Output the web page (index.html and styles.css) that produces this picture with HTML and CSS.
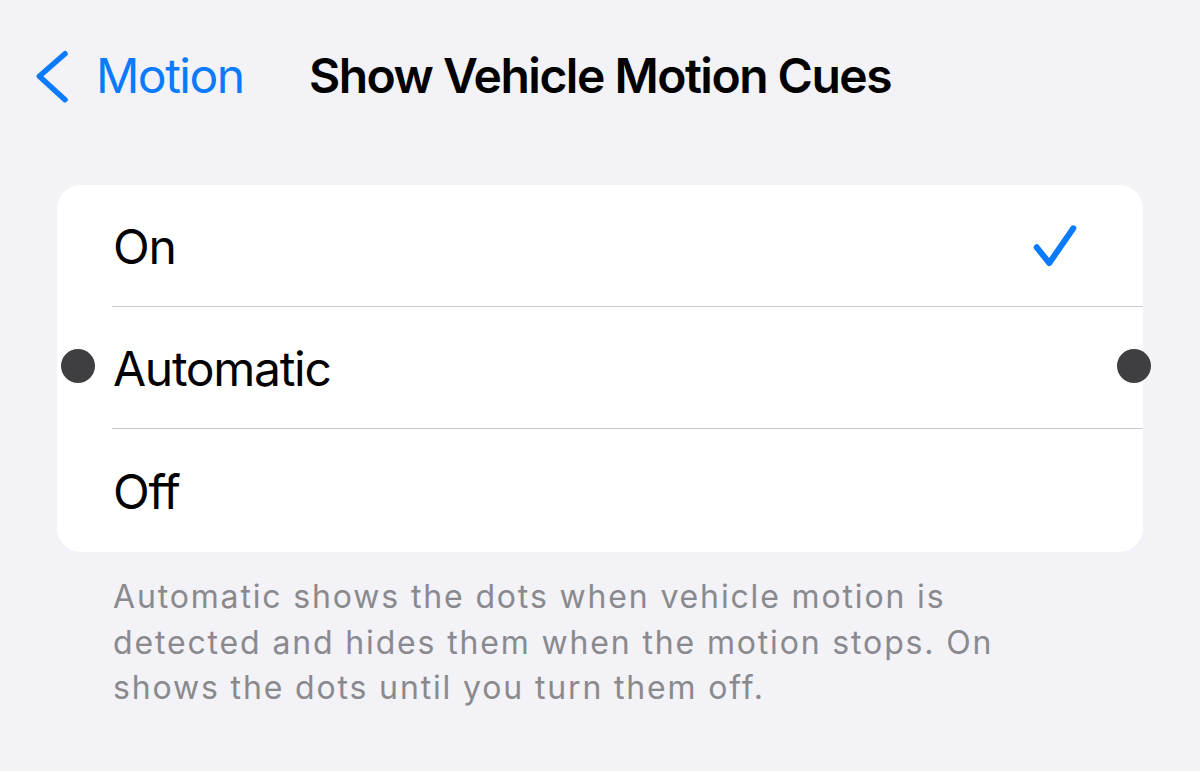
FILE: index.html
```html
<!DOCTYPE html>
<html lang="en">
<head>
<meta charset="utf-8">
<title>Show Vehicle Motion Cues</title>
<link rel="stylesheet" href="styles.css">
</head>
<body>
<header class="nav">
  <a class="back" href="#">
    <svg class="chevron" width="36" height="57" viewBox="0 0 36 57" aria-hidden="true">
      <polyline points="31,5.7 5.3,28.3 31,51.7" fill="none" stroke="#0a7aff" stroke-width="5.5" stroke-linecap="round" stroke-linejoin="round"/>
    </svg>
    <span class="back-label">Motion</span>
  </a>
  <h1 class="title">Show Vehicle Motion Cues</h1>
  <span class="spacer"></span>
</header>

<main class="content">
  <section class="group">
    <div class="row">
      <div class="row-inner">
        <span class="label">On</span>
        <svg class="check" width="50" height="46" viewBox="0 0 50 46" aria-hidden="true">
          <polyline points="6.7,24.3 19.3,40 43.3,5.3" fill="none" stroke="#0a7aff" stroke-width="6" stroke-linecap="round" stroke-linejoin="round"/>
        </svg>
      </div>
    </div>
    <div class="row">
      <div class="row-inner">
        <span class="label">Automatic</span>
      </div>
    </div>
    <div class="row">
      <div class="row-inner last">
        <span class="label">Off</span>
      </div>
    </div>
  </section>
  <p class="footer">Automatic shows the dots when vehicle motion is detected and hides them when the motion stops. On shows the dots until you turn them off.</p>
</main>

<span class="cue-dot cue-left"></span>
<span class="cue-dot cue-right"></span>
</body>
</html>
```

FILE: styles.css
```css
html, body {
  margin: 0;
  padding: 0;
}

body {
  background: #f2f2f7;
  width: 1200px;
  height: 771px;
  overflow: hidden;
  position: relative;
  font-family: "Inter", "Liberation Sans", sans-serif;
  color: #000;
}

.nav {
  display: grid;
  grid-template-columns: 1fr auto 1fr;
  align-items: center;
  padding-top: 46px;
  height: 58px;
}

.back {
  display: flex;
  align-items: center;
  text-decoration: none;
  color: #0a7aff;
  padding-left: 34px;
}

.chevron {
  display: block;
  margin-top: 2px;
}

.back-label {
  font-size: 48px;
  line-height: 58px;
  margin-left: 26px;
  letter-spacing: -1.5px;
}

.title {
  margin: 0;
  font-size: 48px;
  line-height: 58px;
  font-weight: 600;
  letter-spacing: -1.5px;
}

.content {
  padding: 81px 57px 0;
}

.group {
  background: #fff;
  border-radius: 24px;
  overflow: hidden;
}

.row {
  padding-left: 55px;
}

.row-inner {
  display: flex;
  align-items: center;
  justify-content: space-between;
  height: 121px;
  border-bottom: 1px solid #c8c8cc;
  padding-left: 1px;
  padding-right: 63px;
}

.row-inner.last {
  border-bottom: none;
  height: 123px;
}

.label {
  font-size: 48px;
  line-height: 58px;
  padding-top: 3px;
  letter-spacing: -1.3px;
}

.check {
  display: block;
}

.footer {
  margin: 0;
  padding: 22px 90px 0 56px;
  font-size: 32px;
  line-height: 45.5px;
  letter-spacing: 1.85px;
  color: #8a8a8e;
}

.cue-dot {
  position: absolute;
  width: 34px;
  height: 34px;
  border-radius: 50%;
  background: #3f3f41;
  top: 349px;
}

.cue-left {
  left: 61px;
}

.cue-right {
  left: 1117px;
}
```
